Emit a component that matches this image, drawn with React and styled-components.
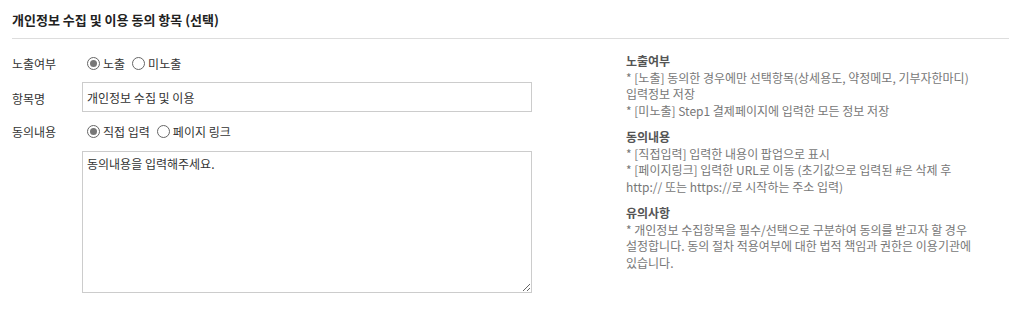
import React from "react";
import styled, { createGlobalStyle } from "styled-components";

const GlobalStyle = createGlobalStyle`
  html, body {
    margin: 0;
    padding: 0;
    background: #fff;
  }
  body {
    font-family: "Noto Sans CJK KR", "Noto Sans", sans-serif;
    color: #333;
  }
`;

const Wrap = styled.div`
  padding: 0 10px 0 12px;
`;

const Header = styled.div`
  height: 38px;
  border-bottom: 1px solid #ddd;
  display: flex;
  align-items: center;

  h2 {
    margin: 0;
    font-size: 13px;
    font-weight: 700;
    color: #222;
    padding-top: 1px;
  }
`;

const Body = styled.div`
  display: flex;
  gap: 94px;
  padding-top: 14px;
`;

const Form = styled.div`
  width: 520px;
  flex-shrink: 0;
  display: grid;
  grid-template-columns: 70px 450px;
  grid-template-rows: 20px 30px 20px 143px;
  row-gap: 9px;
  font-size: 12px;
`;

const Label = styled.div`
  display: flex;
  align-items: center;
  color: #333;
  height: ${(p) => (p.$tall ? "30px" : "20px")};
  padding-top: ${(p) => (p.$tall ? "2px" : "1px")};
  box-sizing: border-box;
`;

const Radios = styled.div`
  display: flex;
  align-items: center;
  gap: 7px;
  padding-left: 5px;
`;

const RadioItem = styled.label`
  display: flex;
  align-items: center;
  gap: 3px;
  color: #333;
  cursor: pointer;
`;

const Circle = styled.span`
  width: 11px;
  height: 11px;
  border: 1px solid #666;
  border-radius: 50%;
  display: flex;
  align-items: center;
  justify-content: center;
  background: #fff;

  &::after {
    content: "";
    width: 7px;
    height: 7px;
    border-radius: 50%;
    background: ${(p) => (p.$on ? "#777" : "transparent")};
  }
`;

const TextInput = styled.input`
  box-sizing: border-box;
  width: 450px;
  height: 30px;
  border: 1px solid #ccc;
  padding: 0 4px;
  font-family: inherit;
  font-size: 12px;
  color: #333;
  outline: none;
`;

const Area = styled.textarea`
  box-sizing: border-box;
  display: block;
  width: 450px;
  height: 142px;
  border: 1px solid #ccc;
  padding: 3px 4px;
  font-family: inherit;
  font-size: 12px;
  line-height: 18px;
  color: #333;
  outline: none;
  margin: 1px 0 0;
`;

const Help = styled.div`
  font-size: 12px;
  line-height: 16.5px;
  color: #777;
`;

const HelpBlock = styled.div`
  margin-bottom: 10px;

  h4 {
    margin: 0;
    font-size: 12px;
    font-weight: 700;
    color: #555;
  }
  p {
    margin: 0;
    white-space: nowrap;
  }
`;

const Radio = ({ on, children }) => (
  <RadioItem>
    <Circle $on={on} />
    {children}
  </RadioItem>
);

const help = [
  {
    title: "노출여부",
    lines: [
      "* [노출] 동의한 경우에만 선택항목(상세용도, 약정메모, 기부자한마디)",
      "입력정보 저장",
      "* [미노출] Step1 결제페이지에 입력한 모든 정보 저장",
    ],
  },
  {
    title: "동의내용",
    lines: [
      "* [직접입력] 입력한 내용이 팝업으로 표시",
      "* [페이지링크] 입력한 URL로 이동 (초기값으로 입력된 #은 삭제 후",
      "http:// 또는 https://로 시작하는 주소 입력)",
    ],
  },
  {
    title: "유의사항",
    lines: [
      "* 개인정보 수집항목을 필수/선택으로 구분하여 동의를 받고자 할 경우",
      "설정합니다. 동의 절차 적용여부에 대한 법적 책임과 권한은 이용기관에",
      "있습니다.",
    ],
  },
];

export default function App() {
  return (
    <Wrap>
      <GlobalStyle />
      <Header>
        <h2>개인정보 수집 및 이용 동의 항목 (선택)</h2>
      </Header>
      <Body>
        <Form>
          <Label>노출여부</Label>
          <Radios>
            <Radio on>노출</Radio>
            <Radio>미노출</Radio>
          </Radios>
          <Label $tall>항목명</Label>
          <TextInput defaultValue="개인정보 수집 및 이용" />
          <Label>동의내용</Label>
          <Radios>
            <Radio on>직접 입력</Radio>
            <Radio>페이지 링크</Radio>
          </Radios>
          <div />
          <Area defaultValue="동의내용을 입력해주세요." />
        </Form>
        <Help>
          {help.map((b) => (
            <HelpBlock key={b.title}>
              <h4>{b.title}</h4>
              {b.lines.map((l) => (
                <p key={l}>{l}</p>
              ))}
            </HelpBlock>
          ))}
        </Help>
      </Body>
    </Wrap>
  );
}
